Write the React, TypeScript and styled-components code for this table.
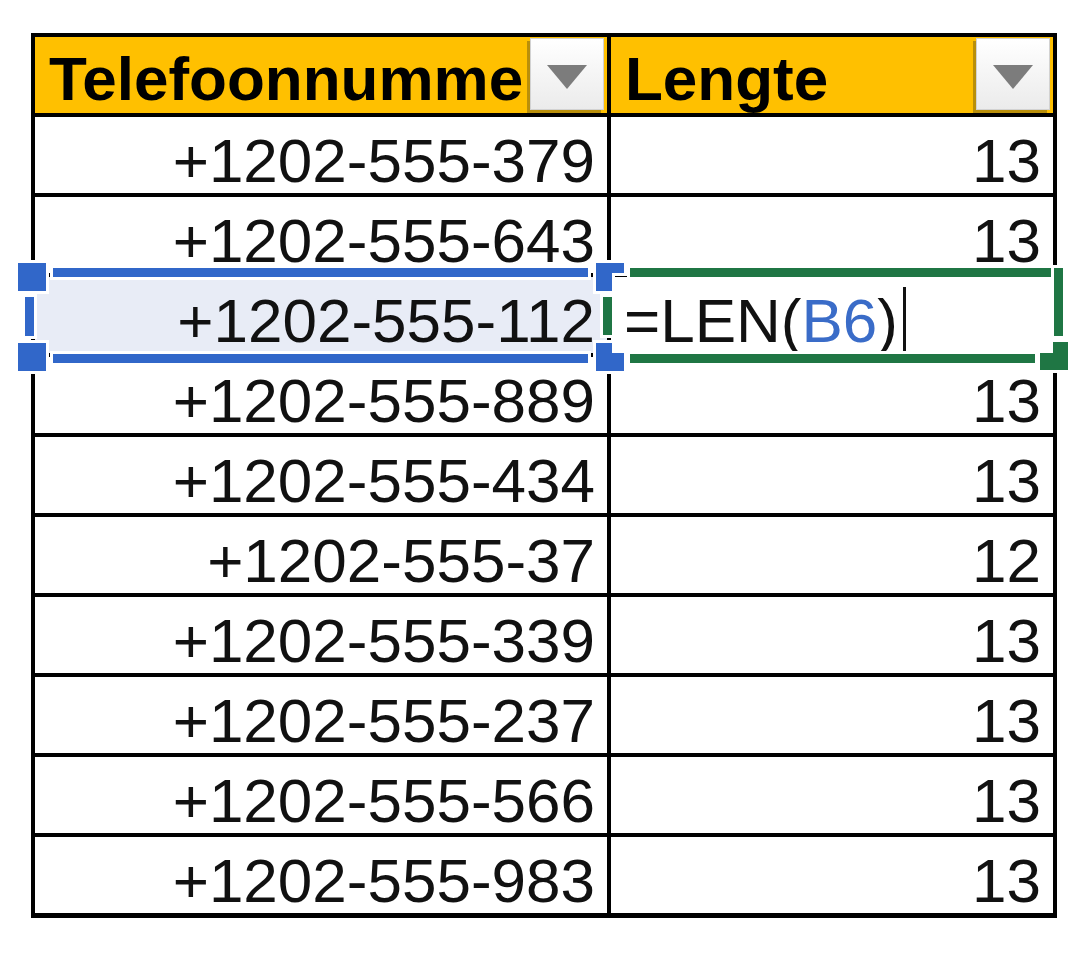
import React from "react";
import styled, { createGlobalStyle } from "styled-components";

const BLUE = "#3167c9";
const GREEN = "#1f7644";

const GlobalStyle = createGlobalStyle`
  html, body {
    margin: 0;
    padding: 0;
    background: #fff;
  }
  body {
    font-family: "Liberation Sans", Arial, sans-serif;
  }
`;

interface Row {
    phone: string;
    length: string;
    editing?: boolean;
}

const rows: Row[] = [
    { phone: "+1202-555-379", length: "13" },
    { phone: "+1202-555-643", length: "13" },
    { phone: "+1202-555-112", length: "", editing: true },
    { phone: "+1202-555-889", length: "13" },
    { phone: "+1202-555-434", length: "13" },
    { phone: "+1202-555-37", length: "12" },
    { phone: "+1202-555-339", length: "13" },
    { phone: "+1202-555-237", length: "13" },
    { phone: "+1202-555-566", length: "13" },
    { phone: "+1202-555-983", length: "13" },
];

type Notch = "tl" | "tr" | "br";

const notchPoints: Record<Notch, string> = {
    tl: "13,0 28,0 28,28 0,28 0,11 13,11",
    tr: "0,0 28,0 28,10 16,10 16,28 0,28",
    br: "0,0 16,0 16,10 28,10 28,28 0,28",
};

// selection corner handle, drawn with a white halo like Excel does
const Handle: React.FC<{ left: number; top: number; color: string; notch?: Notch }> = ({ left, top, color, notch }) => (
    <HandleSvg $left={left} $top={top} viewBox="-3 -3 34 34" width={34} height={34}>
        <polygon
            points={notch ? notchPoints[notch] : "0,0 28,0 28,28 0,28"}
            fill={color}
            stroke="#fff"
            strokeWidth={6}
            strokeLinejoin="miter"
            paintOrder="stroke"
        />
    </HandleSvg>
);

const App: React.FC = () => {
    return (
        <Page>
            <GlobalStyle />
            <Sheet>
                <HeaderCell>
                    <HeaderLabel>Telefoonnummer</HeaderLabel>
                    <FilterButton>
                        <Caret />
                    </FilterButton>
                </HeaderCell>
                <HeaderCell>
                    <HeaderLabel>Lengte</HeaderLabel>
                    <FilterButton>
                        <Caret />
                    </FilterButton>
                </HeaderCell>

                {rows.map((row) =>
                    row.editing ? (
                        <React.Fragment key={row.phone}>
                            <ValueCell $highlight>
                                {row.phone}
                                <Bar $left={18} $top={-9} $w={535} $h={9} $color={BLUE} />
                                <Bar $left={18} $top={77} $w={535} $h={9} $color={BLUE} />
                                <Bar $left={-10} $top={20} $w={9} $h={39} $color={BLUE} />
                                <Handle left={-17} top={-14} color={BLUE} />
                                <Handle left={-17} top={66} color={BLUE} />
                                <Handle left={561} top={-14} color={BLUE} notch="tr" />
                                <Handle left={561} top={66} color={BLUE} notch="br" />
                            </ValueCell>
                            <FormulaCell>
                                <span>
                                    =LEN(<Ref>B6</Ref>)
                                </span>
                                <TextCursor />
                                <Bar $left={19} $top={-9} $w={433} $h={9} $color={GREEN} />
                                <Bar $left={443} $top={-9} $w={9} $h={68} $color={GREEN} />
                                <Bar $left={19} $top={77} $w={405} $h={9} $color={GREEN} />
                                <Bar $left={-8} $top={20} $w={9} $h={38} $color={GREEN} />
                                <Handle left={429} top={65} color={GREEN} notch="tl" />
                            </FormulaCell>
                        </React.Fragment>
                    ) : (
                        <React.Fragment key={row.phone}>
                            <ValueCell>{row.phone}</ValueCell>
                            <ValueCell>{row.length}</ValueCell>
                        </React.Fragment>
                    )
                )}
            </Sheet>
        </Page>
    );
};

export default App;

const Page = styled.div`
    width: 1088px;
    height: 976px;
    padding: 33px 0 0 31px;
    box-sizing: border-box;
    background: #fff;
`;

const Sheet = styled.div`
    display: grid;
    grid-template-columns: 572px 442px;
    grid-auto-rows: 76px;
    gap: 4px;
    padding: 4px 4px 5px 4px;
    width: max-content;
    background: #000;
`;

const HeaderCell = styled.div`
    position: relative;
    display: flex;
    align-items: center;
    padding: 6px 85px 0 14px;
    background: #ffc000;
    color: #000;
    font-size: 62px;
    font-weight: 700;
`;

const HeaderLabel = styled.span`
    flex: 1;
    min-width: 0;
    overflow: hidden;
    white-space: nowrap;
`;

const FilterButton = styled.div`
    position: absolute;
    top: 1px;
    right: 3px;
    width: 74px;
    height: 72px;
    box-sizing: border-box;
    display: flex;
    align-items: center;
    justify-content: center;
    border: 1px solid #d2d2d2;
    background: linear-gradient(#ffffff, #ebebeb);
    box-shadow: -3px 3px 0 #b98f0a;
`;

const Caret = styled.div`
    width: 0;
    height: 0;
    margin-top: 5px;
    border-left: 20px solid transparent;
    border-right: 20px solid transparent;
    border-top: 24px solid #7c7c7c;
`;

const ValueCell = styled.div<{ $highlight?: boolean }>`
    position: relative;
    display: flex;
    align-items: center;
    justify-content: flex-end;
    padding: 10px 12px 0 0;
    background: ${({ $highlight }) => ($highlight ? "#e8ecf6" : "#fff")};
    color: #111;
    font-size: 62px;
    white-space: nowrap;
`;

const FormulaCell = styled.div`
    position: relative;
    display: flex;
    align-items: center;
    padding: 10px 0 0 13px;
    background: #fff;
    color: #111;
    font-size: 62px;
    white-space: nowrap;
`;

const Ref = styled.span`
    color: #3a6cc8;
`;

const TextCursor = styled.div`
    align-self: flex-end;
    width: 3px;
    height: 65px;
    margin: 0 0 1px 5px;
    background: #111;
`;

interface BarProps {
    $left: number;
    $top: number;
    $w: number;
    $h: number;
    $color: string;
}

const Bar = styled.div<BarProps>`
    position: absolute;
    z-index: 2;
    left: ${({ $left }) => $left}px;
    top: ${({ $top }) => $top}px;
    width: ${({ $w }) => $w}px;
    height: ${({ $h }) => $h}px;
    background: ${({ $color }) => $color};
    box-shadow: 0 0 0 3px #fff;
`;

const HandleSvg = styled.svg<{ $left: number; $top: number }>`
    position: absolute;
    z-index: 3;
    left: ${({ $left }) => $left - 3}px;
    top: ${({ $top }) => $top - 3}px;
    overflow: visible;
`;
